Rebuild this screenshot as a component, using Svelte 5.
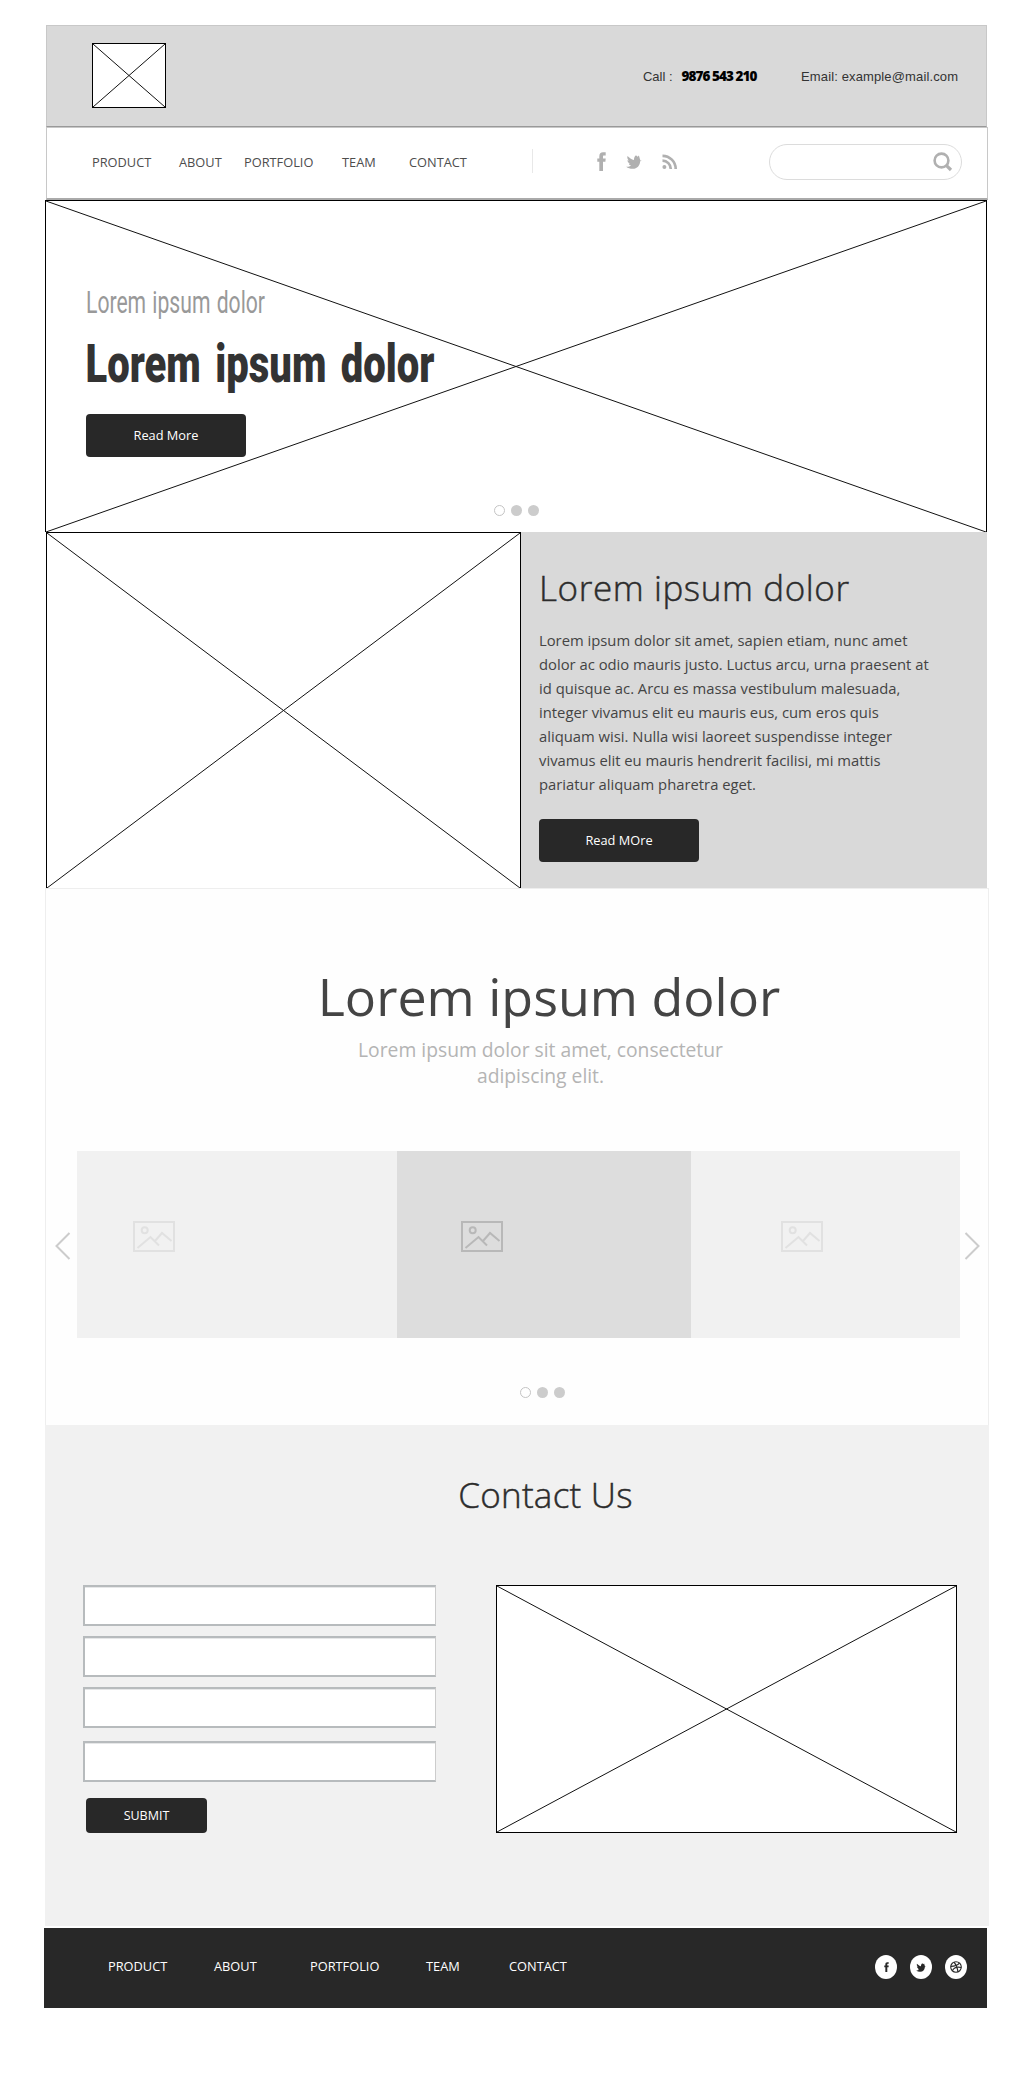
<script>
  const fields = ['name', 'email', 'phone', 'message'];
</script>

{#snippet crossbox(w, h)}
  <svg class="cross" width={w} height={h} viewBox="0 0 {w} {h}">
    <rect x=".5" y=".5" width={w - 1} height={h - 1} fill="#fff" stroke="#000" shape-rendering="crispEdges" />
    <path d="M1 1L{w - 1} {h - 1}M{w - 1} 1L1 {h - 1}" stroke="#111" stroke-width="1" fill="none" />
  </svg>
{/snippet}

{#snippet dots()}
  <div class="dots"><i class="open"></i><i></i><i></i></div>
{/snippet}

{#snippet picture()}
  <svg width="42" height="31" viewBox="0 0 42 31" fill="none" stroke="currentColor" stroke-width="2">
    <path d="M1 1h40v29H1z" />
    <circle cx="11.700" cy="9.200" r="3" />
    <path d="M4.500 27L17.500 16l8.500 8.500M22 20l7-8 9.500 8" />
  </svg>
{/snippet}

{#snippet facebook()}
  <svg class="fb" viewBox="0 0 9 19" fill="currentColor">
    <path d="M2.300 19V9.800H.3V6.500h2V4.300C2.300 1.600 3.700.3 6 .3h2.700v3.200H7c-.8 0-1 .4-1 1.100v1.900h2.700l-.3 3.300H6V19z" />
  </svg>
{/snippet}

{#snippet bird()}
  <svg class="bird" viewBox="0 0 16 14" fill="currentColor">
    <path d="M15.700 5.200l-1.500.2c.1-.5-.1-1-.3-1.500L12.900.4l-1.300 1.300L10 .2C8.300 1.500 7.900 3.200 8 5 5.500 4.500 3.300 2.800 1.500 1c-.6 2 .1 3.400 1.500 4.600L1.400 5.200c.2 1.800 1.400 2.900 2.900 3.400l-1.500.2c.4 1 1.200 1.600 2.300 1.800C3.500 11.800 2 12 .2 11.800c2 1.500 4.300 2.100 6.600 2 4.300-.2 7.200-3.300 7.300-7.400z" />
  </svg>
{/snippet}

<div class="page">
  <header class="top">
    {@render crossbox(74, 65)}
    <div class="contacts">
      <svg width="339" height="30" viewBox="0 0 339 30">
        <text class="plain" x="0" y="20" textLength="29.500">Call :</text>
        <text class="phone" x="38.500" y="20" textLength="76">9876 543 210</text>
        <text class="plain" x="158" y="20" textLength="157">Email: example@mail.com</text>
      </svg>
    </div>
  </header>

  <nav class="bar">
    <div class="links">
      <a href="#product">PRODUCT</a>
      <a href="#about">ABOUT</a>
      <a href="#portfolio">PORTFOLIO</a>
      <a href="#team">TEAM</a>
      <a href="#contact">CONTACT</a>
    </div>
    <div class="social">
      {@render facebook()}
      {@render bird()}
      <svg class="rss" width="16" height="16" viewBox="0 0 16 16" fill="none" stroke="currentColor" stroke-width="2.700">
        <circle cx="2.400" cy="13" r="2" fill="currentColor" stroke="none" />
        <path d="M.5 6.700a8.300 8.300 0 0 1 8.300 8.300M.5 1.800A13.200 13.200 0 0 1 13.700 15" />
      </svg>
    </div>
    <div class="search">
      <svg width="20" height="20" viewBox="0 0 20 20" fill="none" stroke="currentColor">
        <circle cx="8.500" cy="8.500" r="6.900" stroke-width="2.600" />
        <path d="M13.300 13.300l4.700 4.700" stroke-width="3.200" />
      </svg>
    </div>
  </nav>

  <section class="hero">
    <svg class="backdrop" width="942" height="332" viewBox="0 0 942 332">
      <path d="M0 .5H942M.5 0V332M941.500 0V332" stroke="#000" shape-rendering="crispEdges" />
      <path d="M1 1L941 332M941 1L1 332" stroke="#111" fill="none" />
    </svg>
    <div class="copy">
      <svg width="360" height="118" viewBox="0 0 360 118">
        <text class="kicker" x="0" y="32" textLength="179" lengthAdjust="spacingAndGlyphs">Lorem ipsum dolor</text>
        <text class="headline" x="-.5" y="101" textLength="349" lengthAdjust="spacingAndGlyphs">Lorem ipsum dolor</text>
      </svg>
      <button>Read More</button>
    </div>
    {@render dots()}
  </section>

  <section class="feature">
    {@render crossbox(475, 357)}
    <div class="story">
      <h2>Lorem ipsum dolor</h2>
      <p>
        Lorem ipsum dolor sit amet, sapien etiam, nunc amet<br />
        dolor ac odio mauris justo. Luctus arcu, urna praesent at<br />
        id quisque ac. Arcu es massa vestibulum malesuada,<br />
        integer vivamus elit eu mauris eus, cum eros quis<br />
        aliquam wisi. Nulla wisi laoreet suspendisse integer<br />
        vivamus elit eu mauris hendrerit facilisi, mi mattis<br />
        pariatur aliquam pharetra eget.
      </p>
      <button>Read MOre</button>
    </div>
  </section>

  <section class="gallery">
    <h1>Lorem ipsum dolor</h1>
    <p>Lorem ipsum dolor sit amet, consectetur<br />adipiscing elit.</p>
    <div class="carousel">
      <svg class="arrow" width="16" height="28" viewBox="0 0 16 28"><path d="M14.500 1L1.500 14l13 13" /></svg>
      <div class="card first">{@render picture()}</div>
      <div class="card active">{@render picture()}</div>
      <div class="card last">{@render picture()}</div>
      <svg class="arrow" width="16" height="28" viewBox="0 0 16 28"><path d="M1.500 1l13 13-13 13" /></svg>
    </div>
    {@render dots()}
  </section>

  <section class="contact">
    <h2>Contact Us</h2>
    <div class="columns">
      <form>
        {#each fields as field}
          <input name={field} aria-label={field} />
        {/each}
        <button type="button">SUBMIT</button>
      </form>
      {@render crossbox(461, 248)}
    </div>
  </section>

  <footer>
    <div class="footlinks">
      <a href="#product">PRODUCT</a>
      <a href="#about">ABOUT</a>
      <a href="#portfolio">PORTFOLIO</a>
      <a href="#team">TEAM</a>
      <a href="#contact">CONTACT</a>
    </div>
    <div class="badges">
      <span>{@render facebook()}</span>
      <span>{@render bird()}</span>
      <span>
        <svg width="12" height="12" viewBox="0 0 12 12" fill="none" stroke="currentColor" stroke-width="1.100">
          <circle cx="6" cy="6" r="5.300" />
          <path d="M4 1.100C6.200 3.600 7.500 7 8 10.900M.8 5.400c3.500 0 6.500-.5 8.600-3.200M2.300 9.700C4 6.600 7.400 5.500 11.200 6.500" />
        </svg>
      </span>
    </div>
  </footer>
</div>

<style>
  :global(body) {
    background: #fff;
  }
  .page {
    width: 1024px;
    height: 2100px;
    padding: 25px 0 0 44px;
    font-family: 'Open Sans', 'Noto Sans', sans-serif;
    overflow: hidden;
  }
  .page *,
  .page {
    box-sizing: border-box;
  }
  svg {
    display: block;
    flex: none;
  }
  h1,
  h2,
  p {
    margin: 0;
  }
  a {
    color: inherit;
    text-decoration: none;
  }
  button {
    display: block;
    width: 160px;
    height: 43px;
    padding: 0;
    border: 0;
    border-radius: 4px;
    background: #282828;
    color: #fff;
    font: 12.8px/43px 'Open Sans', sans-serif;
  }

  .top {
    display: flex;
    justify-content: space-between;
    width: 941px;
    height: 102px;
    margin-left: 2px;
    padding: 17px 4px 0 45px;
    border: 1px solid #c8c8c8;
    border-bottom-color: #999;
    background: #d9d9d9;
  }
  .contacts {
    padding-top: 18px;
  }
  .plain {
    font: 13px 'Liberation Sans', Arial, sans-serif;
    fill: #333;
  }
  .phone {
    font: 800 13.500px 'Open Sans', sans-serif;
    fill: #000;
  }

  .bar {
    display: flex;
    width: 942px;
    height: 73px;
    margin-left: 2px;
    padding: 16px 25px 0 45px;
    border: 1px solid #c8c8c8;
    border-bottom: 2px solid #aaa;
    color: #b0b0b0;
  }
  .links {
    display: grid;
    grid-template-columns: 87px 65px 98px 67px 123px;
    width: 441px;
    height: 24px;
    margin-top: 5px;
    border-right: 1px solid #e8e8e8;
    color: #4d4d4d;
    font-size: 12.800px;
    line-height: 27px;
  }
  .social {
    display: flex;
    gap: 20px;
    width: 172px;
    margin-left: 64px;
    padding-top: 8px;
  }
  .social .fb {
    width: 9px;
    height: 19px;
  }
  .social .bird {
    width: 16px;
    height: 14px;
    margin-top: 3px;
  }
  .social .rss {
    margin-top: 2px;
  }
  .search {
    width: 193px;
    height: 36px;
    padding: 7px 0 0 163px;
    border: 1px solid #dcdcdc;
    border-radius: 18px;
  }

  .hero {
    position: relative;
    display: flex;
    flex-direction: column;
    width: 942px;
    height: 332px;
    margin-left: 1px;
  }
  .backdrop {
    position: absolute;
    inset: 0;
  }
  .copy {
    position: relative;
    height: 305px;
    padding: 81px 0 0 41px;
  }
  .copy svg {
    margin-bottom: 15px;
    overflow: visible;
  }
  .kicker {
    font: 400 31px Roboto, sans-serif;
    word-spacing: 1.500px;
    fill: #999;
  }
  .headline {
    font: 900 54.500px Roboto, sans-serif;
    word-spacing: 6px;
    fill: #333;
  }
  .dots {
    display: flex;
    gap: 6px;
  }
  .dots i {
    width: 11px;
    height: 11px;
    border-radius: 50%;
    background: #ccc;
  }
  .dots .open {
    border: 1.500px solid #c4c4c4;
    background: #fff;
  }
  .hero .dots {
    position: relative;
    margin-left: 449px;
  }

  .feature {
    display: flex;
    width: 941px;
    height: 356px;
    margin-left: 2px;
    overflow: hidden;
    background: #d9d9d9;
  }
  .story {
    padding: 31px 0 0 18px;
  }
  h2 {
    color: #2c2c2c;
    font-size: 35px;
    font-weight: 300;
    line-height: 50px;
    letter-spacing: 0.250px;
    -webkit-text-stroke: 0.450px #2c2c2c;
  }
  .story h2 {
    letter-spacing: 0.600px;
  }
  .story p {
    margin: 15px 0 23px;
    color: #444;
    font-size: 14.800px;
    line-height: 24px;
    white-space: nowrap;
  }

  .gallery {
    width: 944px;
    height: 537px;
    margin-left: 1px;
    padding-top: 70px;
    border: 1px solid #eee;
    border-bottom: 0;
    background: #fefefe;
  }
  h1 {
    padding-left: 64px;
    color: #444;
    font-size: 52px;
    font-weight: 400;
    line-height: 74px;
    text-align: center;
  }
  .gallery p {
    padding: 4px 0 0 47px;
    color: #b4b4b4;
    font-size: 19.300px;
    line-height: 26px;
    text-align: center;
  }
  .carousel {
    display: flex;
    height: 187px;
    margin-top: 62px;
    padding-left: 9px;
  }
  .arrow {
    margin-top: 81px;
    fill: none;
    stroke: #ccc;
    stroke-width: 2;
  }
  .card {
    height: 187px;
    padding-top: 70px;
    background: #f1f1f1;
    color: #e1e1e1;
  }
  .first {
    width: 320px;
    margin-left: 6px;
    padding-left: 56px;
  }
  .active {
    width: 294px;
    padding-left: 64px;
    background: #ddd;
    color: #b8b8b8;
  }
  .last {
    width: 269px;
    margin-right: 4px;
    padding-left: 90px;
  }
  .gallery .dots {
    margin: 49px 0 0 474px;
  }

  .contact {
    width: 944px;
    height: 501px;
    margin-left: 1px;
    padding-top: 45px;
    background: #f1f1f1;
  }
  .contact h2 {
    padding-left: 57px;
    text-align: center;
  }
  .columns {
    display: flex;
    gap: 60px;
    padding: 65px 0 0 38px;
  }
  form {
    width: 353px;
  }
  input {
    display: block;
    width: 353px;
    height: 41px;
    margin: 0 0 10px;
    border: 2px solid #b7bbbd;
    border-right: 1px solid #ccc;
    border-radius: 0;
    background: #fff;
    box-shadow: inset 0 1px #e6e7e8;
  }
  input:nth-of-type(3) {
    margin-bottom: 13px;
  }
  input:nth-of-type(4) {
    margin-bottom: 16px;
  }
  form button {
    width: 121px;
    height: 35px;
    margin-left: 3px;
    font-size: 12.500px;
    line-height: 35px;
  }

  footer {
    display: flex;
    justify-content: space-between;
    width: 943px;
    height: 80px;
    margin-top: 2px;
    padding: 27px 20px 0 64px;
    background: #282828;
    color: #fff;
  }
  .footlinks {
    display: grid;
    grid-template-columns: 106px 96px 116px 83px 80px;
    font-size: 12.800px;
    line-height: 23px;
  }
  .badges {
    display: flex;
    gap: 13px;
  }
  .badges span {
    display: flex;
    align-items: center;
    justify-content: center;
    width: 22px;
    height: 24px;
    border-radius: 50%;
    background: #fff;
    color: #282828;
  }
  .badges .fb {
    width: 5px;
    height: 10px;
  }
  .badges .bird {
    width: 10px;
    height: 9px;
  }
</style>
